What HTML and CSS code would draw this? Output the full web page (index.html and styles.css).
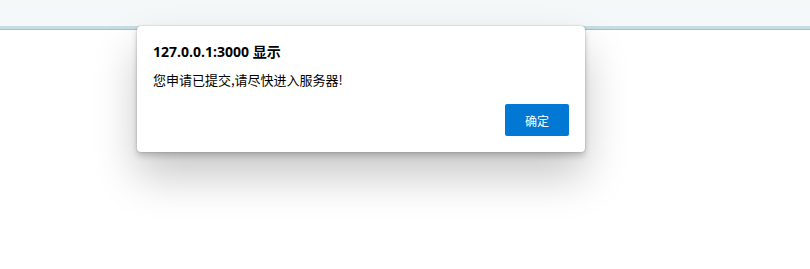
FILE: index.html
```html
<!DOCTYPE html>
<html lang="zh-CN">
<head>
<meta charset="utf-8">
<title>alert</title>
<link rel="stylesheet" href="styles.css">
</head>
<body>
<div class="topbar"></div>
<main class="page"></main>
<div class="dialog" role="alertdialog">
  <div class="dialog-title">127.0.0.1:3000 显示</div>
  <div class="dialog-message">您申请已提交,请尽快进入服务器!</div>
  <div class="dialog-actions">
    <button class="btn-ok">确定</button>
  </div>
</div>
</body>
</html>
```
FILE: styles.css
```css
html, body {
  margin: 0;
  padding: 0;
  background: #ffffff;
  width: 810px;
  height: 269px;
  overflow: hidden;
  font-family: "Open Sans", "Noto Sans CJK SC", sans-serif;
}
.topbar {
  height: 26px;
  background: #f5f8f9;
  border-bottom: 3px solid #c6dde2;
  box-shadow: 0 1px 0 #a8c0c6;
}
.page {
  height: 240px;
}
.dialog {
  position: absolute;
  left: 137px;
  top: 26px;
  width: 448px;
  box-sizing: border-box;
  padding: 16px 16px 16px 16px;
  background: #ffffff;
  border-radius: 4px;
  box-shadow: 0 0 2px rgba(0,0,0,0.25), 0 4px 6px rgba(0,0,0,0.18), 0 24px 44px rgba(0,0,0,0.22);
  color: #000000;
}
.dialog-title {
  font-family: "Open Sans", "Noto Sans CJK SC", sans-serif;
  font-weight: 700;
  font-size: 14px;
  line-height: 20px;
}
.dialog-message {
  margin-top: 8px;
  font-family: "Noto Sans CJK SC", sans-serif;
  font-size: 13px;
  line-height: 20px;
}
.dialog-actions {
  display: flex;
  justify-content: flex-end;
  margin-top: 14px;
}
.btn-ok {
  width: 64px;
  height: 32px;
  border: none;
  border-radius: 2px;
  background: #0078d4;
  color: #ffffff;
  font-family: "Noto Sans CJK SC", sans-serif;
  font-size: 12px;
  padding: 0;
}
```
